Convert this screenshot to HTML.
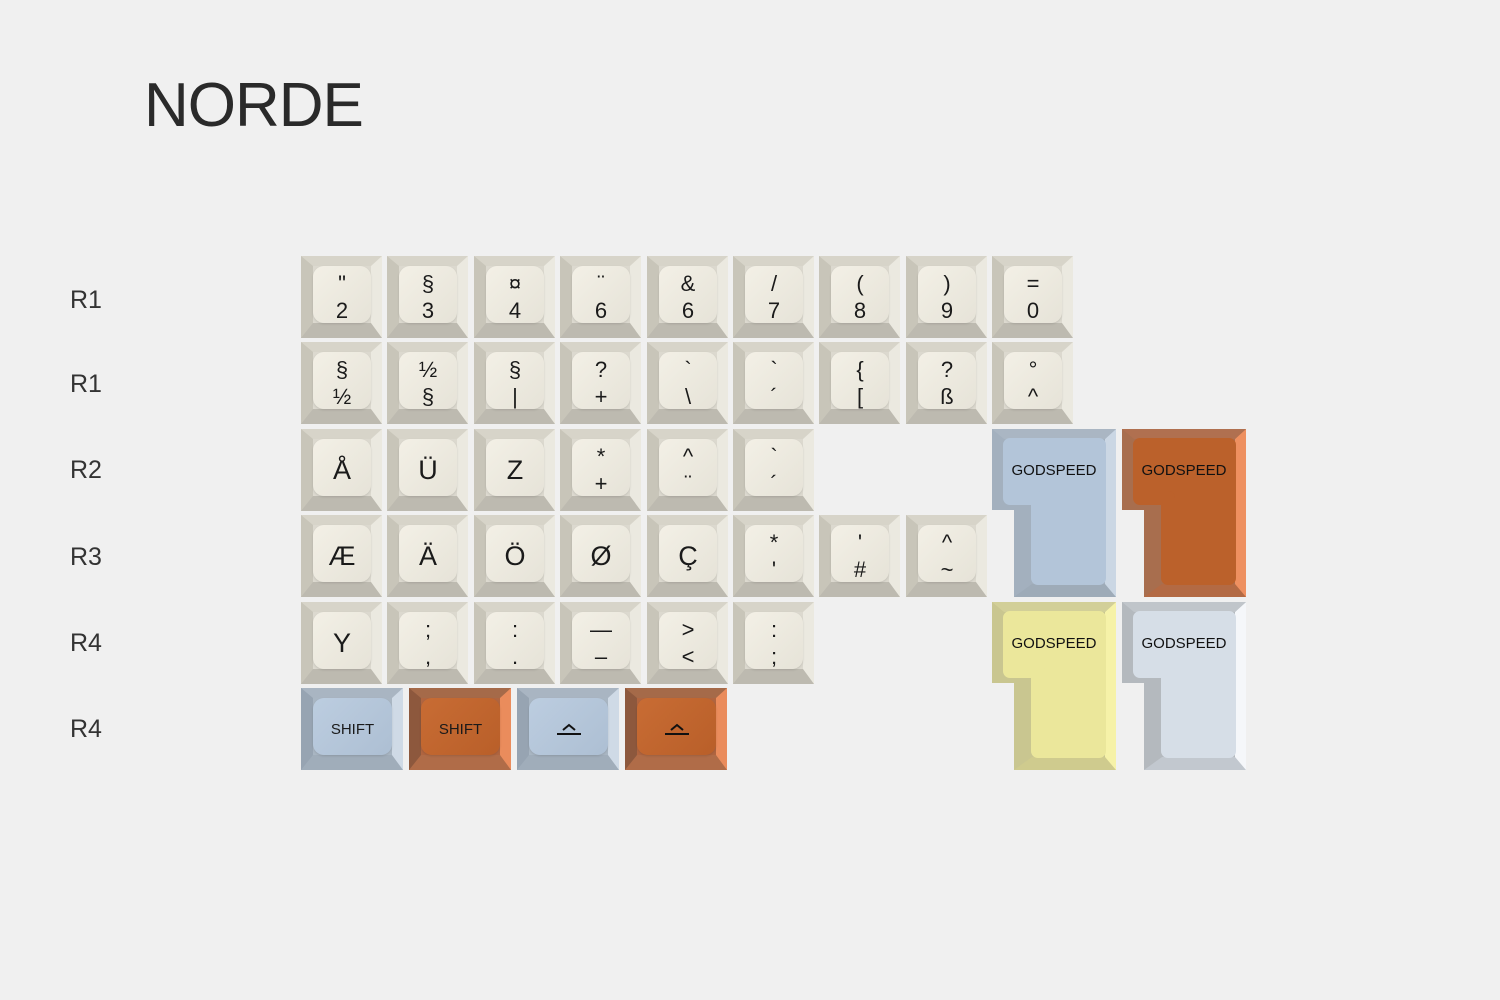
<!DOCTYPE html>
<html><head><meta charset="utf-8"><style>
body{margin:0;width:1500px;height:1000px;background:#f0f0f0;position:relative;overflow:hidden;font-family:"Liberation Sans","DejaVu Sans",sans-serif;color:#1a1a1a}
.t{position:absolute;left:144px;top:70px;font-size:62px;font-weight:normal;color:#2a2a2a;letter-spacing:-1px}
.r{position:absolute;left:70px;font-size:25px;color:#333}
.k{position:absolute;box-sizing:border-box;width:81px;height:82px;border-style:solid;border-width:10px 11px 15px 12px;
border-color:#d7d4c9 #ebe9e0 #bdbab0 #c8c5b9;background:#dcd9cf}
.k .f{box-sizing:border-box;padding-top:5px;width:100%;height:100%;border-radius:11px;background:linear-gradient(135deg,#f3f0e6,#e6e3d8);box-shadow:0 1px 2px rgba(0,0,0,.12);display:flex;flex-direction:column;align-items:center;justify-content:center;font-size:22px;line-height:27px}
.k .f.s{font-size:27px}
.b{border-color:#a9b5c2 #cfdae6 #a0adba #97a4b2;background:#a9b6c3}
.b .f{background:linear-gradient(135deg,#bccde0,#adbfd3)}
.o{border-color:#a56a49 #ea8c5c #b06c48 #8d583d;background:#b06540}
.o .f{background:linear-gradient(135deg,#c86c34,#b95f29)}
.w{width:102px}
.w .f{font-size:15px}
svg{position:absolute}
</style></head><body>
<div class="t">NORDE</div>
<div class="r" style="top:286px">R1</div>
<div class="r" style="top:370px">R1</div>
<div class="r" style="top:456px">R2</div>
<div class="r" style="top:543px">R3</div>
<div class="r" style="top:629px">R4</div>
<div class="r" style="top:715px">R4</div>

<div class="k" style="left:301px;top:256px"><div class="f"><span>"</span><span>2</span></div></div>
<div class="k" style="left:387px;top:256px"><div class="f"><span>§</span><span>3</span></div></div>
<div class="k" style="left:474px;top:256px"><div class="f"><span>¤</span><span>4</span></div></div>
<div class="k" style="left:560px;top:256px"><div class="f"><span>¨</span><span>6</span></div></div>
<div class="k" style="left:647px;top:256px"><div class="f"><span>&amp;</span><span>6</span></div></div>
<div class="k" style="left:733px;top:256px"><div class="f"><span>/</span><span>7</span></div></div>
<div class="k" style="left:819px;top:256px"><div class="f"><span>(</span><span>8</span></div></div>
<div class="k" style="left:906px;top:256px"><div class="f"><span>)</span><span>9</span></div></div>
<div class="k" style="left:992px;top:256px"><div class="f"><span>=</span><span>0</span></div></div>

<div class="k" style="left:301px;top:342px"><div class="f"><span>§</span><span>½</span></div></div>
<div class="k" style="left:387px;top:342px"><div class="f"><span>½</span><span>§</span></div></div>
<div class="k" style="left:474px;top:342px"><div class="f"><span>§</span><span>|</span></div></div>
<div class="k" style="left:560px;top:342px"><div class="f"><span>?</span><span>+</span></div></div>
<div class="k" style="left:647px;top:342px"><div class="f"><span>`</span><span>\</span></div></div>
<div class="k" style="left:733px;top:342px"><div class="f"><span>`</span><span>´</span></div></div>
<div class="k" style="left:819px;top:342px"><div class="f"><span>{</span><span>[</span></div></div>
<div class="k" style="left:906px;top:342px"><div class="f"><span>?</span><span>ß</span></div></div>
<div class="k" style="left:992px;top:342px"><div class="f"><span>°</span><span>^</span></div></div>

<div class="k" style="left:301px;top:429px"><div class="f s"><span>Å</span></div></div>
<div class="k" style="left:387px;top:429px"><div class="f s"><span>Ü</span></div></div>
<div class="k" style="left:474px;top:429px"><div class="f s"><span>Z</span></div></div>
<div class="k" style="left:560px;top:429px"><div class="f"><span>*</span><span>+</span></div></div>
<div class="k" style="left:647px;top:429px"><div class="f"><span>^</span><span>¨</span></div></div>
<div class="k" style="left:733px;top:429px"><div class="f"><span>`</span><span>´</span></div></div>

<div class="k" style="left:301px;top:515px"><div class="f s"><span>Æ</span></div></div>
<div class="k" style="left:387px;top:515px"><div class="f s"><span>Ä</span></div></div>
<div class="k" style="left:474px;top:515px"><div class="f s"><span>Ö</span></div></div>
<div class="k" style="left:560px;top:515px"><div class="f s"><span>Ø</span></div></div>
<div class="k" style="left:647px;top:515px"><div class="f s"><span>Ç</span></div></div>
<div class="k" style="left:733px;top:515px"><div class="f"><span>*</span><span>'</span></div></div>
<div class="k" style="left:819px;top:515px"><div class="f"><span>'</span><span>#</span></div></div>
<div class="k" style="left:906px;top:515px"><div class="f"><span>^</span><span>~</span></div></div>

<div class="k" style="left:301px;top:602px"><div class="f s"><span>Y</span></div></div>
<div class="k" style="left:387px;top:602px"><div class="f"><span>;</span><span>,</span></div></div>
<div class="k" style="left:474px;top:602px"><div class="f"><span>:</span><span>.</span></div></div>
<div class="k" style="left:560px;top:602px"><div class="f"><span>—</span><span>–</span></div></div>
<div class="k" style="left:647px;top:602px"><div class="f"><span>&gt;</span><span>&lt;</span></div></div>
<div class="k" style="left:733px;top:602px"><div class="f"><span>:</span><span>;</span></div></div>

<div class="k b w" style="left:301px;top:688px"><div class="f">SHIFT</div></div>
<div class="k o w" style="left:409px;top:688px"><div class="f">SHIFT</div></div>
<div class="k b w" style="left:517px;top:688px"><div class="f"><svg width="26" height="14" style="position:static"><path d="M7 8 L13 3 L19 8" fill="none" stroke="#111" stroke-width="2"/><path d="M1 12 H25" stroke="#111" stroke-width="2"/></svg></div></div>
<div class="k o w" style="left:625px;top:688px"><div class="f"><svg width="26" height="14" style="position:static"><path d="M7 8 L13 3 L19 8" fill="none" stroke="#111" stroke-width="2"/><path d="M1 12 H25" stroke="#111" stroke-width="2"/></svg></div></div>

<svg style="left:992px;top:429px" width="124" height="168">
<path d="M0 0H124V168H22V81H0Z" fill="#a3b0be"/>
<path d="M124 0V168H113V10Z" fill="#cbd7e4"/>
<path d="M0 0H124L113 10H12Z" fill="#aab6c3"/>
<path d="M22 168H124L113 155H40Z" fill="#9eabb8"/>
<path d="M18 16H107V149H46V69H18Z" fill="#b3c5d9" stroke="#b3c5d9" stroke-width="14" stroke-linejoin="round"/>
<text x="62" y="46" text-anchor="middle" font-size="15" font-family="Liberation Sans" fill="#111">GODSPEED</text>
</svg>
<svg style="left:1122px;top:429px" width="124" height="168">
<path d="M0 0H124V168H22V81H0Z" fill="#a86e4e"/>
<path d="M124 0V168H113V10Z" fill="#ee9060"/>
<path d="M0 0H124L113 10H12Z" fill="#b07050"/>
<path d="M22 168H124L113 155H40Z" fill="#b36a44"/>
<path d="M18 16H107V149H46V69H18Z" fill="#bb612b" stroke="#bb612b" stroke-width="14" stroke-linejoin="round"/>
<text x="62" y="46" text-anchor="middle" font-size="15" font-family="Liberation Sans" fill="#111">GODSPEED</text>
</svg>
<svg style="left:992px;top:602px" width="124" height="168">
<path d="M0 0H124V168H22V81H0Z" fill="#c9c690"/>
<path d="M124 0V168H113V10Z" fill="#f6f2a8"/>
<path d="M0 0H124L113 10H12Z" fill="#d2cf98"/>
<path d="M22 168H124L113 155H40Z" fill="#cfcb8e"/>
<path d="M18 16H107V149H46V69H18Z" fill="#ebe79b" stroke="#ebe79b" stroke-width="14" stroke-linejoin="round"/>
<text x="62" y="46" text-anchor="middle" font-size="15" font-family="Liberation Sans" fill="#111">GODSPEED</text>
</svg>
<svg style="left:1122px;top:602px" width="124" height="168">
<path d="M0 0H124V168H22V81H0Z" fill="#b4b9be"/>
<path d="M124 0V168H113V10Z" fill="#f5f7fa"/>
<path d="M0 0H124L113 10H12Z" fill="#c0c5ca"/>
<path d="M22 168H124L113 155H40Z" fill="#c2c8cf"/>
<path d="M18 16H107V149H46V69H18Z" fill="#d6dee7" stroke="#d6dee7" stroke-width="14" stroke-linejoin="round"/>
<text x="62" y="46" text-anchor="middle" font-size="15" font-family="Liberation Sans" fill="#111">GODSPEED</text>
</svg>
</body></html>
